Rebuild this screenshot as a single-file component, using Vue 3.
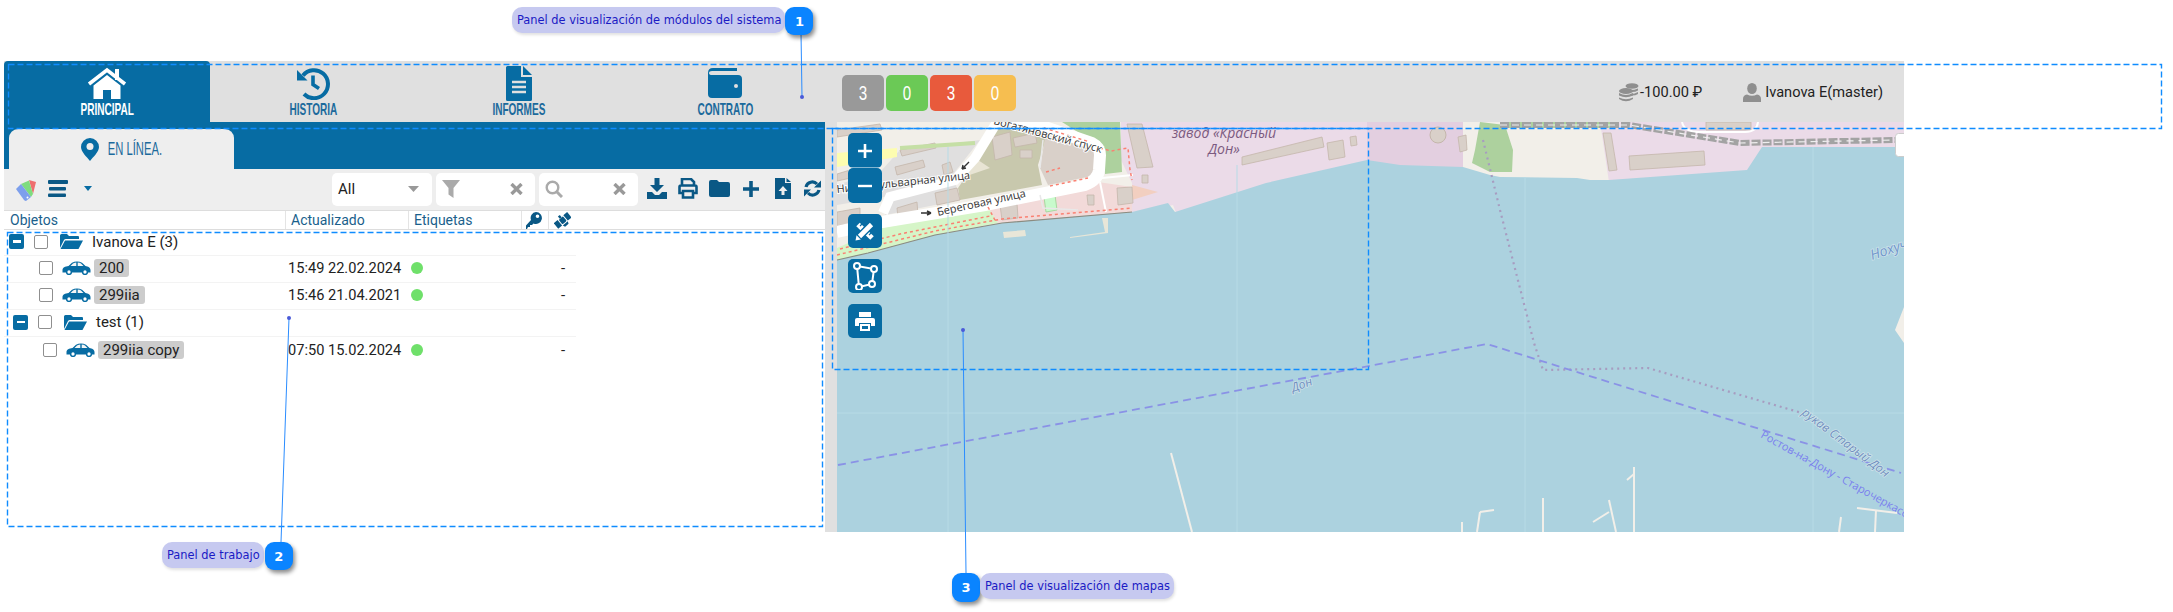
<script setup>
const tabs = [
  { key: 'home', label: 'PRINCIPAL', active: true },
  { key: 'history', label: 'HISTORIA' },
  { key: 'file', label: 'INFORMES' },
  { key: 'wallet', label: 'CONTRATO' }
]
const badges = [
  { n: 3, cls: 'b-grey' },
  { n: 0, cls: 'b-green' },
  { n: 3, cls: 'b-red' },
  { n: 0, cls: 'b-yellow' }
]
const rows = [
  { type: 'group', name: 'Ivanova E (3)', indent: 0 },
  { type: 'object', name: '200', time: '15:49 22.02.2024', indent: 0 },
  { type: 'object', name: '299iia', time: '15:46 21.04.2021', indent: 0 },
  { type: 'group', name: 'test (1)', indent: 4 },
  { type: 'object', name: '299iia copy', time: '07:50 15.02.2024', indent: 4 }
]
const buildings = [
  '895,167 923,160 925,167 897,175', '900,150 935,143 936,148 902,156', '942,165 950,162 953,172 944,175',
  '992,137 1010,132 1012,155 995,160', '1013,138 1035,133 1037,143 1015,147', '1020,150 1032,150 1032,158 1020,158',
  '897,208 917,202 918,215 898,218', '935,193 957,188 960,200 937,205', '1000,205 1017,203 1018,218 1002,220',
  '1117,188 1132,187 1133,203 1118,205', '1087,195 1094,195 1094,205 1088,205', '1127,124 1142,124 1153,167 1137,168',
  '1142,175 1148,175 1148,183 1142,183', '1242,157 1322,137 1324,147 1242,165', '1327,143 1343,140 1345,157 1329,160',
  '1350,137 1356,136 1357,145 1351,146', '1458,137 1466,135 1467,150 1460,152', '1629,156 1704,151 1705,165 1630,170',
  '1603,133 1611,133 1617,170 1609,171', '1706,122 1751,122 1751,130 1706,130', '837,212 860,208 860,222 837,226',
  '837,130 880,124 882,130 837,137', '837,174 850,170 851,178 837,181'
]
const piers = [
  'M1171 453L1192 532', 'M1634 467V532', 'M1634 474L1627 480', 'M1543 498V532', 'M1609 500L1616 532', 'M1593 522L1609 512',
  'M1462 522V532', 'M1480 512L1494 510', 'M1480 512L1477 532', 'M1841 517L1839 532', 'M1857 508L1897 513', 'M1876 510L1875 532'
]
</script>

<template>
  <div class="page">
    <div class="shell">
      <header class="topbar">
        <nav class="tabs">
          <div v-for="t in tabs" :key="t.key" class="tab" :class="{ active: t.active }">
            <div class="tab-icon">
              <svg v-if="t.key === 'home'" width="40" height="32" viewBox="0 0 40 32">
                <path d="M28 2h4v11h-4z" fill="#fff" />
                <path d="M2 17L20 3l18 14" fill="none" stroke="#fff" stroke-width="3.6" />
                <path d="M6.500 18.500L20 8l13.500 10.500V32H24V23h-8v9H6.500z" fill="#fff" />
              </svg>
              <svg v-else-if="t.key === 'history'" width="34" height="34" viewBox="0 0 34 34">
                <path d="M7 9.500A14 14 0 1 1 8 28" fill="none" stroke="#076ca3" stroke-width="4" />
                <path d="M1 4V14.500H11.500z" fill="#076ca3" />
                <path d="M17 9.500V18.500L23 22.500" fill="none" stroke="#076ca3" stroke-width="3.600" />
              </svg>
              <svg v-else-if="t.key === 'file'" width="26" height="35" viewBox="0 0 26 35">
                <path d="M0 1.500Q0 0 1.500 0H15V11H26V33.500Q26 35 24.500 35H1.500Q0 35 0 33.500z" fill="#076ca3" />
                <path d="M17 0L26 9H17z" fill="#076ca3" />
                <path d="M6 16H20M6 21H20M6 26H20" stroke="#e0e0e0" stroke-width="2.400" />
              </svg>
              <svg v-else width="34" height="30" viewBox="0 0 34 30">
                <path d="M5 0H29V3H4Q1 3 1 5Q1 7 4 7H30Q34 7 34 11V26Q34 30 30 30H4Q0 30 0 26V5Q0 0 5 0z" fill="#076ca3" />
                <circle cx="28" cy="18" r="2" fill="#e0e0e0" />
              </svg>
            </div>
            <span class="cond tab-label">{{ t.label }}</span>
          </div>
        </nav>
        <div class="badges">
          <div v-for="(b, i) in badges" :key="i" class="badge" :class="b.cls"><span class="cond num">{{ b.n }}</span></div>
        </div>
        <div class="account">
          <div class="acc-item money">
            <svg width="20" height="19" viewBox="0 0 20 19" fill="#8f8f8f">
              <ellipse cx="13" cy="3" rx="6.500" ry="2.800" />
              <path d="M8 6.500Q13 8 19 5.500V7.500Q16 9.500 11 9zM11 11Q16 11 19 9V11Q16 13 11 12.500z" />
              <ellipse cx="7" cy="8" rx="7" ry="3" />
              <path d="M0 10Q7 14 14 10V12.500Q7 16 0 12.500zM0 14.500Q7 18 14 14.500V16Q7 20.500 0 16z" />
            </svg>
            <span>-100.00 ₽</span>
          </div>
          <div class="acc-item user">
            <svg width="18" height="19" viewBox="0 0 18 19" fill="#8f8f8f">
              <ellipse cx="9" cy="5.500" rx="4.800" ry="5.500" />
              <path d="M0 16Q0 12 4 11.500Q9 14 14 11.500Q18 12 18 16V19H0z" />
            </svg>
            <span>Ivanova E(master)</span>
          </div>
        </div>
      </header>

      <div class="workspace">
        <section class="panel">
          <div class="subnav">
            <div class="subtab">
              <svg width="18" height="23" viewBox="0 0 18 23">
                <path d="M9 0A9 9 0 0 1 18 9C18 14 12 19 9 23C6 19 0 14 0 9A9 9 0 0 1 9 0z" fill="#076ca3" />
                <circle cx="9" cy="8.500" r="3.500" fill="#eee" />
              </svg>
              <span class="cond sub-label">EN LÍNEA.</span>
            </div>
          </div>

          <div class="toolbar">
            <svg class="palette" width="22" height="22" viewBox="0 0 22 22">
              <path d="M14 1L21 3L18 15z" fill="#ee6f6f" />
              <path d="M6 5L14 1.500L18 15L16 18z" fill="#7fdc7f" />
              <path d="M1 10L6 5L16 18L11 22Q10 22 9 21z" fill="#7d9fec" />
              <circle cx="12.500" cy="18.500" r="1" fill="#fff" />
            </svg>
            <svg class="burger" width="20" height="17" viewBox="0 0 20 17" fill="#0a5885">
              <rect width="20" height="4" rx="1" /><rect x="1" y="7" width="17" height="3.500" rx="1" /><rect y="13.500" width="18" height="3.500" rx="1" />
            </svg>
            <svg class="caret" width="8" height="5" viewBox="0 0 8 5"><path d="M0 0H8L4 5z" fill="#076ca3" /></svg>

            <div class="fields">
              <div class="field f-select">
                <span>All</span>
                <svg width="11" height="6" viewBox="0 0 11 6"><path d="M0 0H11L5.500 6z" fill="#999" /></svg>
              </div>
              <div class="field f-input">
                <svg width="18" height="18" viewBox="0 0 18 18"><path d="M0 0H18L11.500 8V18L6.500 14.500V8z" fill="#aaa" /></svg>
                <svg width="13" height="12" viewBox="0 0 13 12"><path d="M1.500 1L11.500 11M11.500 1L1.500 11" stroke="#999" stroke-width="3.400" /></svg>
              </div>
              <div class="field f-input">
                <svg width="18" height="18" viewBox="0 0 18 18"><circle cx="7.500" cy="7.500" r="5.800" fill="none" stroke="#aaa" stroke-width="2.400" /><path d="M11.500 11.500L17 17" stroke="#aaa" stroke-width="3" /></svg>
                <svg width="13" height="12" viewBox="0 0 13 12"><path d="M1.500 1L11.500 11M11.500 1L1.500 11" stroke="#999" stroke-width="3.400" /></svg>
              </div>
            </div>

            <div class="actions">
              <svg width="20" height="21" viewBox="0 0 20 21" fill="#0a5885">
                <path d="M7.500 0h5v7H17l-7 7-7-7h4.500zM0 14h5l3 3h4l3-3h5v7H0z" />
              </svg>
              <svg width="20" height="21" viewBox="0 0 20 21">
                <path d="M4 7V1h9l3 3v3M4 15H1.500V9Q1.500 7.500 3 7.500H17Q18.500 7.500 18.500 9V15H16M5 13H15V19.500H5z" fill="none" stroke="#0a5885" stroke-width="2.600" />
              </svg>
              <svg width="21" height="17" viewBox="0 0 21 17" fill="#0a5885">
                <path d="M2 0H8L10 2H19Q21 2 21 4V15Q21 17 19 17H2Q0 17 0 15V2Q0 0 2 0z" />
              </svg>
              <svg class="a-plus" width="18" height="18" viewBox="0 0 18 18"><path d="M9 1V17M1 9H17" stroke="#0a5885" stroke-width="3.600" /></svg>
              <svg class="a-file" width="16" height="21" viewBox="0 0 16 21" fill="#0a5885">
                <path fill-rule="evenodd" d="M0 0H10V5H16V21H0zM8 8L3.500 13H6.500V17H9.500V13H12.500z" /><path d="M11.500 0L16 4H11.500z" />
              </svg>
              <svg class="a-sync" width="17" height="17" viewBox="0 0 17 17">
                <path d="M2 7A6.500 6.500 0 0 1 13 4M15 10A6.500 6.500 0 0 1 4 13" fill="none" stroke="#0a5885" stroke-width="3.200" />
                <path d="M10 7.500H17V0.500zM7 9.500H0V16.500z" fill="#0a5885" />
              </svg>
            </div>
          </div>

          <div class="thead">
            <div class="th th-obj">Objetos</div>
            <div class="th th-upd">Actualizado</div>
            <div class="th th-tag">Etiquetas</div>
            <div class="th th-key">
              <svg width="16" height="17" viewBox="0 0 16 17" fill="#0a5885">
                <path fill-rule="evenodd" d="M10 0A6 6 0 1 1 7.500 11.500L6 13H4V15H2L1 17H0V13.500L5 8A6 6 0 0 1 10 0zM11.500 2.500A1.800 1.800 0 1 0 11.500 6.100A1.800 1.800 0 1 0 11.500 2.500z" />
              </svg>
            </div>
            <div class="th th-sat">
              <svg width="17" height="17" viewBox="0 0 17 17" fill="#0a5885">
                <g transform="rotate(-40 8.500 8.500)">
                  <rect x="6" y="5.500" width="5.500" height="6" rx="1" />
                  <rect x="0" y="5" width="5" height="7" />
                  <rect x="12.500" y="5" width="5" height="7" />
                  <path d="M5.500 12.500H12L11 15H6.500z" />
                  <rect x="7.500" y="2.500" width="2.500" height="3" />
                </g>
              </svg>
            </div>
          </div>

          <div class="tree">
            <div v-for="r in rows" :key="r.name" class="row" :class="'row-' + r.type">
              <div class="cell-name" :style="{ paddingLeft: r.indent + 'px' }">
                <template v-if="r.type === 'group'">
                  <span class="minus"><i></i></span>
                  <span class="check"></span>
                  <svg class="folder" width="23" height="15" viewBox="0 0 23 15" fill="#076ca3">
                    <path d="M0 14V1.500Q0 0 1.500 0H7L9 2H18Q19 2 19 3V5H6Q4.500 5 4 6z" />
                    <path d="M5 6.500H23L18.500 15H0.500z" />
                  </svg>
                  <span class="group-name">{{ r.name }}</span>
                </template>
                <template v-else>
                  <span class="check"></span>
                  <svg class="car-icon" width="29" height="14" viewBox="0 0 29 14">
                    <path fill="#076ca3" d="M0.500 9C0.500 6.500 3 5.500 6.500 5L10 1.800C13 0 17 0 20 1.800L23.500 5C26 5.500 28.500 6.500 28.500 9V11.500H0.500z" />
                    <path fill="#f5f5f5" d="M8.500 5L11 2.600Q13 1.600 14.300 1.500V5zM15.700 1.500Q18 1.600 19 2.600L21.500 5H15.700z" />
                    <circle cx="7" cy="11" r="2.400" fill="#fff" stroke="#076ca3" stroke-width="1.500" />
                    <circle cx="23" cy="11" r="2.400" fill="#fff" stroke="#076ca3" stroke-width="1.500" />
                  </svg>
                  <span class="chip">{{ r.name }}</span>
                </template>
              </div>
              <template v-if="r.type === 'object'">
                <div class="cell-time">{{ r.time }}</div>
                <div class="cell-tag"><span class="dot"></span><span class="dash">-</span></div>
              </template>
            </div>
          </div>
        </section>

        <div class="splitter"></div>

        <div class="map">
          <svg class="map-svg" width="1067" height="410" viewBox="837 122 1067 410">
            <rect x="837" y="122" width="1067" height="410" fill="#f2efe9" />
            <polygon points="1121,122 1367,122 1367,165 1177,215 1173,205 1132,214 1132,183 1121,160" fill="#ebdbe8" />
            <polygon points="1367,122 1463,122 1463,170 1367,165" fill="#e3cfe0" />
            <polygon points="1600,122 1904,122 1904,150 1762,150 1747,172 1609,182" fill="#ebdbe8" />
            <polygon points="1480,122 1475,150 1472,163 1490,172 1512,172 1513,150 1505,125" fill="#add19e" />
            <rect x="1500" y="122" width="116" height="6" fill="#add19e" />
            <polygon points="1062,122 1120,122 1122,172 1105,174 1103,148" fill="#add19e" />
            <polygon points="837,185 882,170 900,150 980,140 950,178 890,196 837,205" fill="#e0dfdf" />
            <polygon points="837,153 897,148 897,157 837,167" fill="#fdfdb0" />
            <polygon points="885,215 892,199 955,182 960,200" fill="#e0dfdf" />
            <polygon points="958,188 975,163 998,128 1048,132 1038,165 1042,185 960,200" fill="#c8c8ad" />
            <polygon points="955,180 975,158 990,168" fill="#e8e4d4" />
            <polygon points="1045,138 1098,148 1097,175 1048,185 1040,168" fill="#d9d0c9" />
            <polygon points="837,248 882,228 988,207 998,223 935,235 868,253 837,260" fill="#d6f5c8" />
            <polygon points="998,223 988,207 1098,182 1132,187 1132,212" fill="#f2dad9" />
            <polygon points="1132,185 1158,192 1132,200" fill="#f2cfc0" />
            <polygon points="1044,197 1055,195 1057,210 1046,212" fill="#c8facc" stroke="#a9d8a0" />
            <polygon v-for="(b, i) in buildings" :key="i" :points="b" fill="#d9d0c9" stroke="#c4b6ab" stroke-width=".8" />
            <circle cx="1438" cy="135" r="8" fill="#d9d0c9" stroke="#c4b6ab" />
            <path d="M900 148L975 143" stroke="#c5dfa5" stroke-width="4" fill="none" />
            <path d="M837 232L882 222L985 205L1085 185Q1098 180 1099 170L1100 155Q1100 147 1092 143L1048 128L1005 118" fill="none" stroke="#fff" stroke-width="12" />
            <path d="M883 213L890 197L955 180L975 158L997 122" fill="none" stroke="#fff" stroke-width="10" />
            <path d="M1100 182L1106 212M1102 178L1133 175" stroke="#fff" stroke-width="2" fill="none" />
            <path d="M1040 168L1043 140M1040 195L1043 208L1078 210" stroke="#e8e8e8" stroke-width="1.500" fill="none" />
            <path d="M1682 122Q1684 132 1700 132H1745Q1757 132 1758 122" stroke="#fff" stroke-width="2" fill="none" />
            <g fill="none" stroke="#fa8072" stroke-width="1.500" stroke-dasharray="3 3">
              <path d="M837 255L935 231L1002 219L1132 208M840 249L900 234L990 216M1100 148L1111 151L1128 148L1130 170L1132 180M1044 128L1090 142M1050 186L1088 178M988 207L996 222M1046 172L1060 168" />
            </g>
            <path d="M837 262L868 255L935 237L1002 225L1132 214" fill="none" stroke="#8b8b80" stroke-width="4" stroke-dasharray="1.500 17" />
            <polygon points="837,260 868,253 935,235 1002,223 1106,214 1132,212 1168,203 1175,212 1266,183 1367,160 1400,165 1463,167 1490,175 1500,177 1577,178 1590,180 1609,180 1747,170 1762,147 1904,147 1904,307 1895,330 1904,343 1904,532 837,532" fill="#acd2df" />
            <path d="M837 260L868 253L935 235L1002 223L1132 212" fill="none" stroke="#8b8b80" stroke-width="1.200" />
            <path d="M1003 232L1025 230L1026 236L1004 238zM1070 237L1105 232L1102 218L1108 218L1108 233L1070 238z" fill="#e8e6d8" />
            <path d="M948 147V532M1237 165V532M1525 177V532M1813 147V532M837 413H1904" stroke="#b7dbe6" stroke-width="1" fill="none" />
            <path d="M1500 125H1629L1740 143L1895 140" fill="none" stroke="#a3a3a3" stroke-width="6" stroke-dasharray="9 2" />
            <path d="M1500 125H1629L1740 143L1895 140" fill="none" stroke="#eee" stroke-width="1.200" stroke-dasharray="7 5" />
            <path d="M1483 140L1500 210L1534 343L1543 370L1648 368L1802 413" fill="none" stroke="#a79cc0" stroke-width="2.200" stroke-dasharray="2 4" />
            <path d="M838 465L1487 344L1901 473" fill="none" stroke="#8a92e6" stroke-width="1.800" stroke-dasharray="8 5" />
            <path v-for="(p, i) in piers" :key="i" :d="p" fill="none" stroke="#f2efe9" stroke-width="2" />
            <g class="road-text">
              <text transform="translate(938 216) rotate(-12.400)">Береговая улица</text>
              <text transform="translate(837 193) rotate(-6)">Нижнебульварная улица</text>
              <text transform="translate(993 124) rotate(15)">Богатяновский спуск</text>
            </g>
            <path d="M921 213H931M931 213L927 211M931 213L927 215" stroke="#333" stroke-width="1.400" fill="none" />
            <path d="M969 162L962 169M962 169L963 165M962 169L966 168" stroke="#333" stroke-width="1.400" fill="none" />
            <g class="plant-text">
              <text x="1224" y="138">завод «Красный</text>
              <text x="1224" y="154">Дон»</text>
            </g>
            <text class="water-text" transform="translate(1293 392) rotate(-20)">Дон</text>
            <text class="water-text" transform="translate(1801 414) rotate(37)">рукав Старый Дон</text>
            <text class="route-text" transform="translate(1760 437) rotate(29)">Ростов-на-Дону - Старочеркасск</text>
            <text class="water-text big" transform="translate(1872 260) rotate(-18)">Нохуч</text>
            <rect x="1895.500" y="133.500" width="12" height="23" rx="3" fill="#fff" stroke="#ccc" />
          </svg>

          <div class="map-controls">
            <div class="zoom-group">
              <div class="map-btn"><svg width="16" height="16" viewBox="0 0 16 16"><path d="M8 1V15M1 8H15" stroke="#fff" stroke-width="2.600" /></svg></div>
              <div class="map-btn"><svg width="16" height="16" viewBox="0 0 16 16"><path d="M1 8H15" stroke="#fff" stroke-width="2.400" /></svg></div>
            </div>
            <div class="map-btn">
              <svg width="20" height="20" viewBox="0 0 20 20" fill="none">
                <path d="M3 3.500L17 17" stroke="#fff" stroke-width="5" />
                <path d="M5 5L7 3M8 8L10 6M14 14L16 12" stroke="#076ca3" stroke-width="1.200" />
                <path d="M16.500 3.500L4.500 15.500" stroke="#076ca3" stroke-width="7.500" />
                <path d="M16.500 3.500L4.500 15.500" stroke="#fff" stroke-width="4.600" />
                <path d="M0.500 19.500L1.500 14.200L5.800 18.500z" fill="#fff" />
              </svg>
            </div>
            <div class="map-btn">
              <svg width="26" height="28" viewBox="0 0 26 28" fill="none" stroke="#fff" stroke-width="2">
                <path d="M5 4L22 7L20 22L7 25z" />
                <circle cx="5" cy="4" r="3" fill="#076ca3" /><circle cx="22" cy="7" r="3" fill="#076ca3" /><circle cx="20" cy="22" r="3" fill="#076ca3" /><circle cx="7" cy="25" r="3" fill="#076ca3" />
              </svg>
            </div>
            <div class="map-btn">
              <svg width="20" height="19" viewBox="0 0 20 19" fill="#fff">
                <path fill-rule="evenodd" d="M4 0H16V5H4zM2 6H18Q20 6 20 8V14H16V11H4V14H0V8Q0 6 2 6z" /><path d="M5 12H15V19H5z" /><path d="M7 14H13V17H7z" fill="#076ca3" />
              </svg>
            </div>
          </div>
        </div>
      </div>
    </div>

    <svg class="overlay" width="2173" height="612" viewBox="0 0 2173 612">
      <g fill="none" stroke="#0f8cff" stroke-width="1.400" stroke-dasharray="6 3">
        <rect x="8.500" y="64.500" width="2153" height="64" />
        <rect x="7.500" y="232.500" width="815" height="294" />
        <rect x="832.500" y="128.500" width="536" height="241" />
      </g>
      <g fill="none" stroke="#2a8cff" stroke-width="1">
        <path d="M801 33L802 97" />
        <path d="M289 318L281 542" />
        <path d="M963 330L966 573" />
      </g>
      <g fill="#4a5ad8">
        <circle cx="802" cy="97" r="2" /><circle cx="289" cy="318" r="2" /><circle cx="963" cy="330" r="2" />
      </g>
    </svg>

    <div class="callout c1"><span class="c-label">Panel de visualización de módulos del sistema</span><span class="c-num">1</span></div>
    <div class="callout c2"><span class="c-label">Panel de trabajo</span><span class="c-num">2</span></div>
    <div class="callout c3"><span class="c-num">3</span><span class="c-label">Panel de visualización de mapas</span></div>
  </div>
</template>

<style scoped>
.page {
  position: relative;
  width: 2173px;
  height: 612px;
  overflow: hidden;
  background: #fff;
  font-family: Roboto, "Liberation Sans", sans-serif;
  color: #222;
}
.shell {
  width: 1900px;
  margin-left: 4px;
  padding-top: 61px;
}
.cond {
  display: inline-block;
  font-family: "Liberation Sans", sans-serif;
  transform: scaleX(.59);
  white-space: nowrap;
}
.cond.num { transform: scaleX(.72); }

.topbar {
  display: flex;
  align-items: stretch;
  height: 61px;
  background: #e0e0e0;
}
.tabs { display: flex; }
.tab {
  width: 206px;
  display: flex;
  flex-direction: column;
  align-items: center;
  color: #1c6a9c;
}
.tab.active {
  background: #076ca3;
  border-radius: 4px 4px 0 0;
  color: #fff;
}
.tab-icon {
  height: 40px;
  padding-top: 4px;
  box-sizing: border-box;
  display: flex;
  align-items: center;
  justify-content: center;
}
.tab-label { font-size: 17px; font-weight: 700; line-height: 18px; }
.badges { display: flex; gap: 2px; margin-left: 14px; padding-top: 14px; }
.badge {
  width: 42px;
  height: 36px;
  border-radius: 5px;
  color: #fff;
  font-size: 21px;
  display: flex;
  align-items: center;
  justify-content: center;
}
.b-grey { background: #999; }
.b-green { background: #6bc956; }
.b-red { background: #e85a3c; }
.b-yellow { background: #f6be50; }
.account {
  margin-left: auto;
  display: flex;
  align-items: center;
  gap: 41px;
  padding-right: 21px;
  padding-top: 1px;
  font-size: 14.600px;
  color: #222;
}
.acc-item { display: flex; align-items: center; }
.money { gap: 1px; }
.user { gap: 4px; }

.workspace { display: flex; height: 410px; }
.panel { width: 821px; background: #fff; }
.subnav { height: 47px; background: #076ca3; padding: 7px 0 0 5px; box-sizing: border-box; }
.subtab {
  width: 225px;
  height: 40px;
  background: #eee;
  border-radius: 9px 9px 0 0;
  display: flex;
  align-items: center;
  justify-content: center;
  gap: 9px;
  box-sizing: border-box;
}
.sub-label { color: #1c6a9c; font-size: 19px; margin: 0 -19px; }

.toolbar {
  height: 41px;
  background: #eee;
  display: flex;
  align-items: center;
  position: relative;
}
.palette { margin-left: 11px; }
.burger { margin-left: 11px; margin-top: -2px; }
.caret { margin-left: 16px; margin-top: -2px; }
.fields { display: flex; gap: 4px; margin-left: 240px; margin-top: -1px; }
.field {
  height: 33px;
  background: #fff;
  border-radius: 5px;
  display: flex;
  align-items: center;
  justify-content: space-between;
  box-sizing: border-box;
  font-size: 15px;
}
.f-select { width: 100px; padding: 0 13px 0 6px; }
.f-input { width: 99px; padding: 0 12px 0 6px; }
.actions {
  display: flex;
  align-items: center;
  gap: 11px;
  margin-left: 9px;
  margin-top: -2px;
}
.a-plus { margin-left: 1px; }
.a-file { margin-left: 4px; }
.a-sync { margin-left: 2px; }

.thead {
  display: flex;
  height: 20px;
  border-top: 1px solid #ddd;
  border-bottom: 1px solid #ddd;
  box-sizing: border-box;
  font-size: 14px;
  color: #1a5f8c;
}
.th {
  display: flex;
  align-items: center;
  box-sizing: border-box;
  border-right: 1px solid #e4e4e4;
  white-space: nowrap;
}
.th-obj { width: 282px; padding-left: 6px; }
.th-upd { width: 123px; padding-left: 5px; }
.th-tag { width: 113px; padding-left: 5px; }
.th-key { width: 27px; padding-left: 4px; }
.th-sat { border-right: 0; padding-left: 5px; }

.tree { width: 572px; }
.row {
  height: 27px;
  box-sizing: border-box;
  border-bottom: 1px solid #f3f3f3;
  padding-bottom: 2px;
  display: grid;
  grid-template-columns: 284px 123px 150px;
  align-items: center;
  font-size: 15px;
}
.row:first-child { height: 26px; }
.row:last-child { border-bottom: 0; }
.cell-name { display: flex; align-items: center; }
.check {
  width: 14px;
  height: 14px;
  border: 1.500px solid #8f8f8f;
  border-radius: 2px;
  box-sizing: border-box;
  background: #fff;
  flex: none;
}
.minus {
  width: 15px;
  height: 15px;
  background: #076ca3;
  border-radius: 2px;
  margin-left: 5px;
  margin-right: 10px;
  display: flex;
  align-items: center;
  justify-content: center;
}
.minus i { width: 8px; height: 2.500px; background: #fff; }
.folder { margin-left: 12px; }
.group-name { margin-left: 9px; white-space: nowrap; }
.row-object .check { margin-left: 35px; }
.car-icon { margin-left: 9px; flex: none; }
.chip {
  margin-left: 3px;
  background: #ccc;
  border-radius: 3px;
  height: 18px;
  line-height: 18px;
  padding: 0 5px;
  white-space: nowrap;
}
.cell-time { font-size: 14.600px; white-space: nowrap; }
.cell-tag { display: flex; align-items: center; }
.dot { width: 12px; height: 12px; border-radius: 50%; background: #6fe06a; flex: none; }
.dash { margin-left: 138px; }

.splitter { width: 12px; background: #e0e0e0; }
.map { position: relative; width: 1067px; height: 410px; overflow: hidden; }
.map-svg { display: block; }
.road-text text { font: 11px "Open Sans", sans-serif; fill: #333; stroke: #fff; stroke-width: 2px; paint-order: stroke; }
.plant-text text { font: italic 14px "Open Sans", sans-serif; fill: #7c5a80; text-anchor: middle; }
.water-text { font: italic 12px "Open Sans", sans-serif; fill: #6f8fbf; stroke: #cfe3ea; stroke-width: 1.500px; paint-order: stroke; }
.water-text.big { font-size: 14px; fill: #6f96cc; }
.route-text { font: 11px "Open Sans", sans-serif; fill: #7a80ee; }
.map-controls {
  position: absolute;
  left: 11px;
  top: 11px;
  display: flex;
  flex-direction: column;
  gap: 11px;
}
.zoom-group { display: flex; flex-direction: column; }
.map-btn {
  width: 34px;
  height: 34px;
  background: #076ca3;
  border-radius: 5px;
  display: flex;
  align-items: center;
  justify-content: center;
}
.zoom-group .map-btn { height: 35px; }
.zoom-group .map-btn + .map-btn { box-shadow: 0 -1px 0 rgba(255,255,255,.5); }

.overlay { position: absolute; left: 0; top: 0; pointer-events: none; }
.callout { position: absolute; display: flex; align-items: flex-start; font-family: "DejaVu Sans", sans-serif; font-size: 11.400px; }
.c-label {
  height: 26px;
  line-height: 26px;
  background: #c6c9f0;
  color: #1a1ac4;
  border-radius: 10px;
  padding: 0 4px 0 5px;
  white-space: nowrap;
  box-shadow: 1px 2px 3px rgba(0,0,0,.12);
}
.c-num {
  width: 28px;
  height: 28px;
  background: #0a84ff;
  color: #fff;
  border-radius: 9px;
  font-weight: 700;
  font-size: 13px;
  display: flex;
  align-items: center;
  justify-content: center;
  box-shadow: 2px 3px 4px rgba(0,0,0,.45);
}
.c1 { left: 512px; top: 7px; }
.c2 { left: 162px; top: 542px; }
.c2 .c-num { margin-left: 1px; }
.c3 { left: 952px; top: 573px; }
.c3 .c-num { height: 29px; }
</style>

<style>
html, body { margin: 0; padding: 0; background: #fff; }
</style>
